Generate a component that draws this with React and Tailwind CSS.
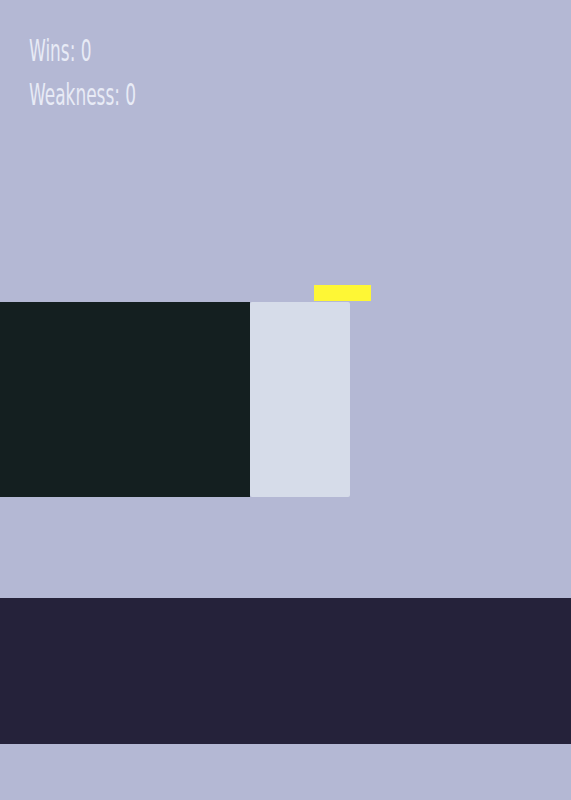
// Stick hero style scene: score header, platforms and the floor band

const font = { fontFamily: '"DejaVu Sans", "Liberation Sans", sans-serif' };

function Score({ label, value }) {
  return (
    <div className="h-[44px] leading-[44px]">
      <span
        className="inline-block origin-left scale-x-[0.565] text-[30px] font-normal text-[#e8ebf6] whitespace-nowrap"
        style={font}
      >
        {label}: {value}
      </span>
    </div>
  );
}

export default function App() {
  const wins = 0;
  const weakness = 0;

  return (
    <div className="h-[800px] w-full bg-[#b4b8d4] flex flex-col overflow-hidden">
      {/* Stats */}
      <div className="pl-[29px] pt-[29px] h-[285px]">
        <Score label="Wins" value={wins} />
        <Score label="Weakness" value={weakness} />
      </div>

      {/* Stage */}
      <div className="relative h-[212px]">
        <div className="absolute left-[314px] top-0 w-[57px] h-[16px] bg-[#fef735]" />
        <div className="flex pt-[17px]">
          <div className="w-[250px] h-[195px] bg-[#141f20]" />
          <div className="w-[100px] h-[195px] bg-[#d6dce9] rounded-[2px]" />
        </div>
      </div>

      {/* Floor */}
      <div className="mt-[101px] h-[146px] bg-[#25223a]" />
    </div>
  );
}
